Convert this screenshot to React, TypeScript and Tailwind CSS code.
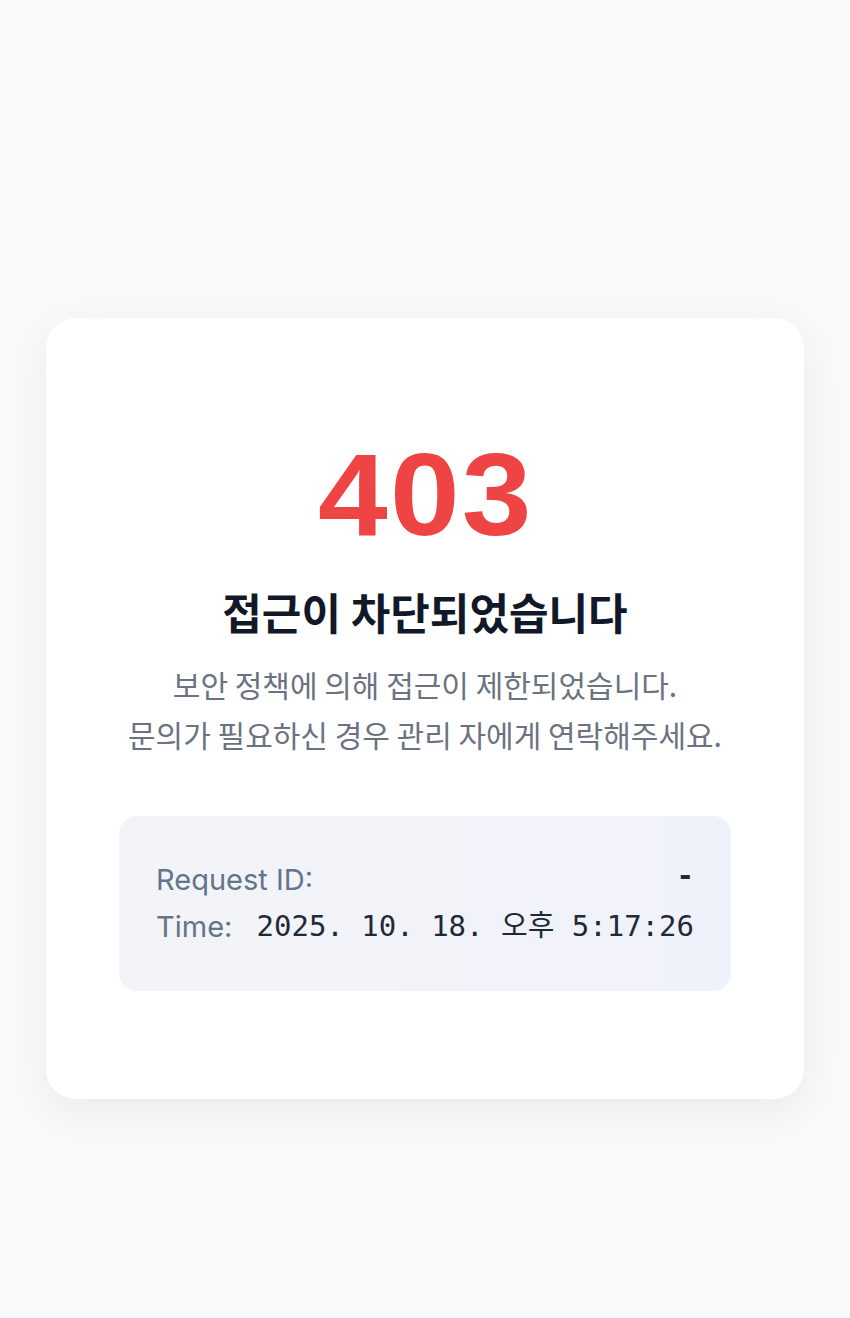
import React from "react";

export default function App() {
  return (
    <div className="min-h-[1318px] w-full bg-[#f9f9fa] pt-[318px] px-[46px]">
      <div className="rounded-[30px] bg-white shadow-[0_12px_40px_rgba(15,23,42,0.06)] px-[73px] pt-[119px] pb-[108px] flex flex-col items-center">
        <div className="pl-[2px] text-[116px] leading-none font-bold tracking-[2px] scale-x-[1.08] text-[#ef4444] font-['Liberation_Sans',Arial,sans-serif]">
          403
        </div>
        <h1 className="mt-[32px] text-[43px] leading-[52px] font-bold text-[#111827] text-center font-['Noto_Sans_CJK_KR','Noto_Sans',sans-serif]">
          접근이 차단되었습니다
        </h1>
        <p className="mt-[22px] text-[30px] leading-[50px] text-[#6b7280] text-center font-['Noto_Sans_CJK_KR','Noto_Sans',sans-serif]">
          보안 정책에 의해 접근이 제한되었습니다.
          <br />
          문의가 필요하신 경우 관리 자에게 연락해주세요.
        </p>
        <div className="mt-[57px] w-full rounded-[18px] bg-gradient-to-r from-[#f3f4f7] to-[#f0f2fb] px-[37px] py-[41px] flex flex-col gap-[1px]">
          <div className="flex items-center justify-between h-[46px]">
            <span className="text-[29px] text-[#64748b] font-['Inter','Noto_Sans',sans-serif]">
              Request ID:
            </span>
            <span className="-mt-[8px] text-[29px] font-bold text-[#1f2937] font-['DejaVu_Sans_Mono',monospace]">
              -
            </span>
          </div>
          <div className="flex items-center justify-between h-[46px]">
            <span className="text-[29px] text-[#64748b] font-['Inter','Noto_Sans',sans-serif]">
              Time:
            </span>
            <span className="text-[29px] text-[#1f2937] font-['DejaVu_Sans_Mono','Noto_Sans_CJK_KR',monospace]">
              2025. 10. 18. 오후 5:17:26
            </span>
          </div>
        </div>
      </div>
    </div>
  );
}
